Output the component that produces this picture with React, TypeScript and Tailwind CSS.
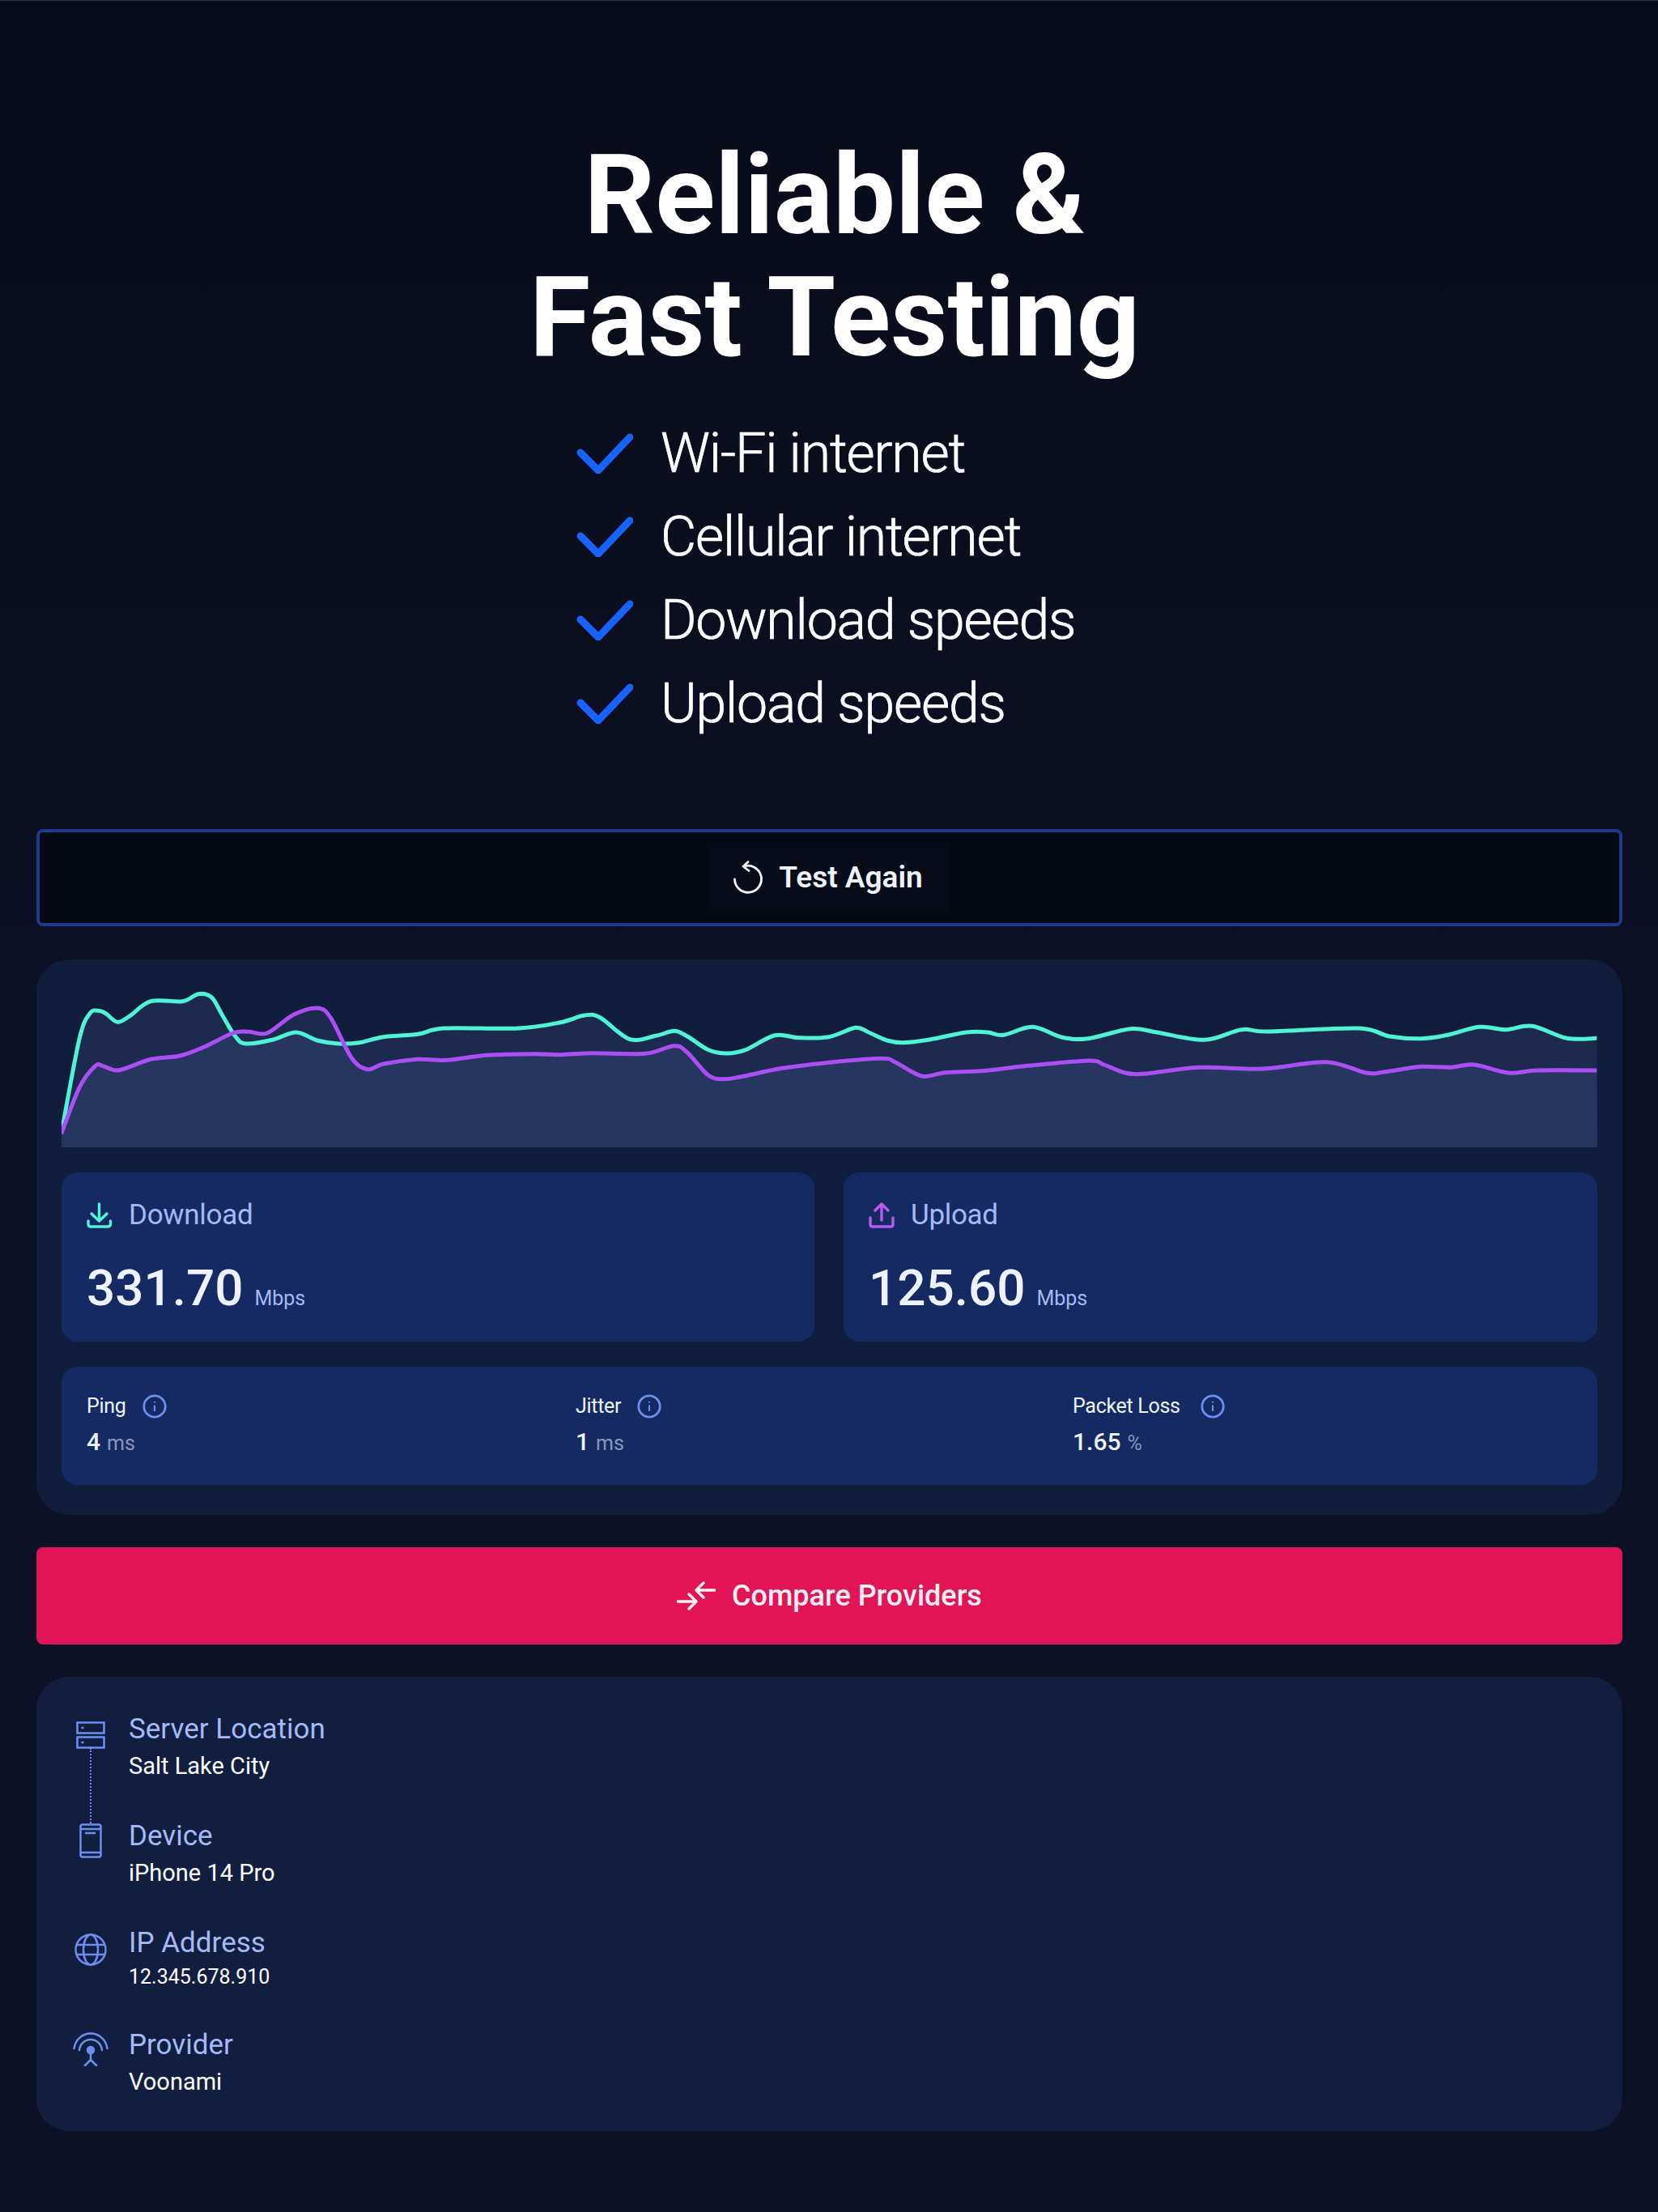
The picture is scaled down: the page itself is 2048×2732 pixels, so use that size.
import { useMemo } from 'react';

type Pt = [number, number];

// traced from the reference, left half and right half of the chart
const tealLeft: Pt[] = [[116,1200],[150,850],[170,755],[185,745],[200,755],[222,787],[245,765],[285,710],[345,710],[375,683],[400,695],[420,760],[445,840],[465,867],[515,853],[560,825],[600,855],[640,867],[680,863],[725,842],[790,832],[840,810],[980,810],[1060,788],[1105,762],[1135,770],[1190,850],[1240,838],[1275,820],[1300,840],[1340,890],[1375,903],[1410,890],[1465,836],[1510,845]];
const tealRight: Pt[] = [[0,842],[50,808],[75,825],[110,855],[140,863],[190,852],[260,825],[300,825],[330,835],[385,805],[440,843],[490,848],[570,812],[620,825],[710,853],[780,815],[830,822],[1000,810],[1060,840],[1120,848],[1170,835],[1230,805],[1280,815],[1330,802],[1395,847],[1452,847]];
const purpleLeft: Pt[] = [[116,1200],[150,1030],[180,950],[195,950],[225,965],[285,925],[340,912],[385,880],[440,828],[470,823],[505,828],[555,760],[600,735],[625,770],[665,920],[695,962],[725,942],[790,925],[845,928],[920,910],[1010,905],[1060,908],[1120,902],[1220,904],[1275,875],[1300,900],[1340,985],[1370,998],[1400,990],[1480,958]];
const purpleRight: Pt[] = [[0,937],[100,922],[125,935],[175,987],[220,974],[290,968],[370,950],[490,930],[520,945],[560,975],[600,978],[700,955],[820,960],[940,935],[1015,975],[1050,972],[1120,952],[1175,955],[1220,945],[1285,975],[1340,966],[1452,966]];

const toChart = (left: Pt[], right: Pt[]): Pt[] => [
  ...left.map(([x, y]): Pt => [x / 1.531 - 76, y / 3 - 217]),
  ...right.map(([x, y]): Pt => [x / 1.531 + 1024 - 76, y / 3 - 217]),
];

const smooth = (p: Pt[]) => {
  let d = `M${p[0][0].toFixed(1)} ${p[0][1].toFixed(1)}`;
  for (let i = 0; i < p.length - 1; i++) {
    const a = p[Math.max(i - 1, 0)];
    const b = p[i];
    const c = p[i + 1];
    const e = p[Math.min(i + 2, p.length - 1)];
    const c1x = b[0] + (c[0] - a[0]) / 6;
    const c1y = b[1] + (c[1] - a[1]) / 6;
    const c2x = c[0] - (e[0] - b[0]) / 6;
    const c2y = c[1] - (e[1] - b[1]) / 6;
    d += `C${c1x.toFixed(1)} ${c1y.toFixed(1)} ${c2x.toFixed(1)} ${c2y.toFixed(1)} ${c[0].toFixed(1)} ${c[1].toFixed(1)}`;
  }
  return d;
};

const SpeedChart = () => {
  const teal = useMemo(() => smooth(toChart(tealLeft, tealRight)), []);
  const purple = useMemo(() => smooth(toChart(purpleLeft, purpleRight)), []);
  return (
    <svg viewBox="0 0 1897 200" className="block w-[1897px] h-[200px]" fill="none">
      <path d={`${teal}L1897 200L0 200Z`} fill="#8a9cff" fillOpacity="0.1" />
      <path d={`${purple}L1897 200L0 200Z`} fill="#8a9cff" fillOpacity="0.1" />
      <path d={teal} stroke="#4ff3d6" strokeWidth="5" />
      <path d={purple} stroke="#ab4ff5" strokeWidth="5" />
    </svg>
  );
};

const Check = () => (
  <svg viewBox="0 0 70 50" className="w-[70px] h-[50px]" fill="none" stroke="#1763ff" strokeWidth="9" strokeLinecap="round" strokeLinejoin="round">
    <path d="M5 24L27 46L66 5" />
  </svg>
);

const Info = () => (
  <svg viewBox="0 0 30 30" className="w-[30px] h-[30px] shrink-0" fill="none" stroke="#6d8ff0" strokeWidth="2.8">
    <circle cx="15" cy="15" r="13.2" />
    <path d="M15 13.5V21" strokeWidth="2" />
    <path d="M15 9V10.4" strokeWidth="2" />
  </svg>
);

const Stat = ({ icon, label, value }: { icon: React.ReactNode; label: string; value: string }) => (
  <div className="h-[209px] rounded-[20px] bg-[#152a63] pl-[31px] pt-[33px]">
    <div className="flex items-center h-[40px] gap-[20px]">
      {icon}
      <span className="text-[35px] leading-[40px] tracking-[-0.3px] text-[#a4b9f5]">{label}</span>
    </div>
    <div className="mt-[34px] text-[62px] leading-[72px] font-medium text-[#eef2fd]">
      {value}
      <span className="ml-[14px] text-[25px] font-normal text-[#a4b9f5]">Mbps</span>
    </div>
  </div>
);

const Metric = ({ label, value, unit, gap }: { label: string; value: string; unit: string; gap: string }) => (
  <div>
    <div className={`flex items-center h-[30px] ${gap}`}>
      <span className="text-[25px] leading-[30px] tracking-[-0.3px] text-[#eef2fd]">{label}</span>
      <Info />
    </div>
    <div className="mt-[11px] text-[30px] leading-[36px] font-medium text-[#eef2fd]">
      {value}
      <span className="ml-[8px] text-[25px] font-normal text-[#8a97b8]">{unit}</span>
    </div>
  </div>
);

const InfoRow = ({ icon, label, value, valueClass }: { icon: React.ReactNode; label: string; value: string; valueClass: string }) => (
  <div className="flex gap-[11px]">
    <div className="w-[72px] flex justify-center shrink-0">{icon}</div>
    <div>
      <div className="text-[35px] leading-[40px] text-[#a4b9f5]">{label}</div>
      <div className={`mt-[9px] text-white ${valueClass}`}>{value}</div>
    </div>
  </div>
);

export default function App() {
  return (
    <div className="min-h-[2732px] bg-gradient-to-b from-[#080b18] to-[#0d1126] to-[50%] border-t border-[#2a3040] font-['Roboto',sans-serif] pl-[45px] pr-[44px] pt-[165px]">
      {/* Hero */}
      <h1 className="text-center text-[137px] leading-[151px] font-bold text-white pl-[13px]">
        Reliable &amp;
        <br />
        Fast Testing
      </h1>
      <ul className="mt-[40px] ml-[667px]">
        {['Wi-Fi internet', 'Cellular internet', 'Download speeds', 'Upload speeds'].map((item) => (
          <li key={item} className="flex items-center h-[103px] gap-[34px] text-[68px] font-light tracking-[-1.2px] [-webkit-text-stroke:0.7px_white] text-white">
            <Check />
            {item}
          </li>
        ))}
      </ul>

      <button className="mt-[104px] w-full h-[120px] rounded-[8px] border-4 border-[#1c3a8c] bg-[#060a14] flex items-center justify-center">
        <span className="mr-[3px] flex items-center gap-[20px] px-[32px] py-[22px] bg-[#080c18] text-[37px] leading-[40px] font-semibold text-[#eef2fd]">
          <svg viewBox="0 0 36 42" className="w-[36px] h-[42px]" fill="none" stroke="#f2f4fb" strokeWidth="2.8" strokeLinecap="round" strokeLinejoin="round">
            <path d="M13 7A16.5 16.5 0 1 1 1.5 23" />
            <path d="M18 1.5L12 7L19 12.5" />
          </svg>
          Test Again
        </span>
      </button>

      {/* Results */}
      <section className="mt-[41px] rounded-[40px] bg-[#101d3d] px-[31px] pt-[32px] pb-[37px]">
        <SpeedChart />
        <div className="mt-[31px] grid grid-cols-[930px_931px] gap-[36px]">
          <Stat
            label="Download"
            value="331.70"
            icon={
              <svg viewBox="0 0 32 32" className="w-[32px] h-[32px]" fill="none" stroke="#4ff3d6" strokeWidth="3.4" strokeLinecap="round" strokeLinejoin="round">
                <path d="M15.5 2V23M6 14L15.5 23L25 14" />
                <path d="M2 23V27C2 29 3 30 5 30H26C28 30 29.5 29 29.5 27V23" />
              </svg>
            }
          />
          <Stat
            label="Upload"
            value="125.60"
            icon={
              <svg viewBox="0 0 32 32" className="w-[32px] h-[32px]" fill="none" stroke="#b65cf0" strokeWidth="3.4" strokeLinecap="round" strokeLinejoin="round">
                <path d="M16 22V2M8 10L16 2L24 10" />
                <path d="M2 19V27C2 29 3 30 5 30H27C29 30 30 29 30 27V19" />
              </svg>
            }
          />
        </div>
        <div className="mt-[31px] h-[146px] rounded-[20px] bg-[#152a63] pl-[31px] pt-[34px] grid grid-cols-[604px_614px_1fr]">
          <Metric label="Ping" value="4" unit="ms" gap="gap-[20px]" />
          <Metric label="Jitter" value="1" unit="ms" gap="gap-[20px]" />
          <Metric label="Packet Loss" value="1.65" unit="%" gap="gap-[25px]" />
        </div>
      </section>

      <button className="mt-[40px] w-full h-[120px] rounded-[8px] bg-[#e11456] flex items-center justify-center gap-[20px] text-[36px] font-medium text-[#fdeef4]">
        <svg viewBox="0 0 48 36" className="w-[48px] h-[36px]" fill="none" stroke="#fdeef4" strokeWidth="3.4" strokeLinecap="round" strokeLinejoin="round">
          <path d="M47 11H25M33 2L24 11L33 20" />
          <path d="M1 25H23M15 16L24 25L15 34" />
        </svg>
        Compare Providers
      </button>

      {/* Connection details */}
      <section className="relative mt-[40px] h-[561px] rounded-[40px] bg-[#121e40] pl-[31px] pt-[45px] flex flex-col gap-[51px]">
        <div className="absolute left-[66px] top-[88px] h-[93px] border-l-2 border-dotted border-[#6d8ff0]" />
        <InfoRow
          label="Server Location"
          value="Salt Lake City"
          valueClass="text-[29px] leading-[32px]"
          icon={
            <svg viewBox="0 0 36 34" className="mt-[10px] w-[36px] h-[34px]" fill="none" stroke="#6d8ff0" strokeWidth="2.5">
              <rect x="1.5" y="1.5" width="33" height="13" />
              <rect x="1.5" y="19.5" width="33" height="13" />
              <path d="M6.5 8H9.5M6.5 26H9.5" />
            </svg>
          }
        />
        <InfoRow
          label="Device"
          value="iPhone 14 Pro"
          valueClass="text-[29px] leading-[32px]"
          icon={
            <svg viewBox="0 0 28 43" className="mt-[4px] w-[28px] h-[43px]" fill="none" stroke="#6d8ff0" strokeWidth="2.5">
              <rect x="1.5" y="1.5" width="25" height="40" rx="2.5" />
              <path d="M1.5 36H26.5M7 12H20M1.5 7H26.5" />
            </svg>
          }
        />
        <InfoRow
          label="IP Address"
          value="12.345.678.910"
          valueClass="text-[25px] leading-[26px]"
          icon={
            <svg viewBox="0 0 40 40" className="mt-[8px] w-[40px] h-[40px]" fill="none" stroke="#6d8ff0" strokeWidth="2.5">
              <circle cx="20" cy="20" r="18.5" />
              <ellipse cx="20" cy="20" rx="9" ry="18.5" />
              <path d="M3 14H37M3 26H37" />
            </svg>
          }
        />
        <InfoRow
          label="Provider"
          value="Voonami"
          valueClass="text-[29px] leading-[32px]"
          icon={
            <svg viewBox="0 0 44 42" className="mt-[4px] w-[44px] h-[42px]" fill="none" stroke="#6d8ff0" strokeWidth="2.5" strokeLinecap="round" strokeLinejoin="round">
              <path d="M1.5 20C3 9 12 1.5 22 1.5C32 1.5 41 9 42.5 20" />
              <path d="M8 22C9 14 15 9 22 9C29 9 35 14 36 22" />
              <circle cx="22" cy="22" r="4" fill="#6d8ff0" />
              <path d="M22 25V34M15 41L22 34L29 41" />
            </svg>
          }
        />
      </section>
    </div>
  );
}
